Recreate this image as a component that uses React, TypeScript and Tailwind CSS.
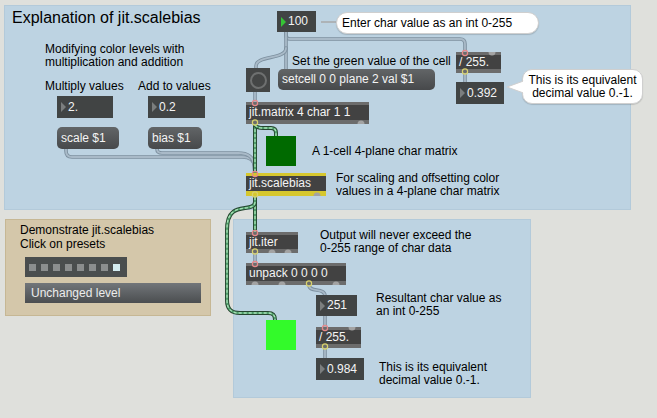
import React from "react";

const Obj = ({ className, label, yellow }: { className: string; label: string; yellow?: boolean }) => {
  const top = yellow ? "h-[3px] bg-[#d6c72e]" : "h-[3px] bg-[#6c6c6c]";
  const bottom = yellow ? "h-[5px] bg-[#d6c72e]" : "h-[4px] bg-[#6c6c6c]";
  return (
    <div className={`absolute flex flex-col bg-[#424242] ${className}`}>
      <div className={top} />
      <div className="flex flex-1 items-center whitespace-nowrap pl-[3px] text-[12px] leading-[13px] text-[#f4f4f4]">
        {label}
      </div>
      <div className={bottom} />
    </div>
  );
};

const Num = ({ className, value, active }: { className: string; value: string; active?: boolean }) => (
  <div className={`absolute flex items-center bg-[#414444] ${className}`}>
    <div
      className={`ml-[4px] h-0 w-0 border-y-[5px] border-l-[5px] border-y-transparent ${
        active ? "border-l-[#35c435]" : "border-l-[#7b7e7e]"
      }`}
    />
    <span className="ml-[2px] text-[12px] leading-[13px] text-[#f4f4f4]">{value}</span>
  </div>
);

const Msg = ({ className, label }: { className: string; label: string }) => (
  <div
    className={`absolute flex items-center whitespace-nowrap rounded-[5px] bg-linear-to-b from-[#626567] to-[#47494b] pl-[4px] text-[12px] leading-[13px] text-[#f4f4f4] ${className}`}
  >
    {label}
  </div>
);

const Note = ({ className, children }: { className: string; children: React.ReactNode }) => (
  <div className={`absolute whitespace-nowrap text-[12px] leading-[13px] text-black ${className}`}>{children}</div>
);

const Gray = ({ d }: { d: string }) => (
  <>
    <path d={d} stroke="#7d909f" strokeWidth={3.6} fill="none" strokeLinecap="round" />
    <path d={d} stroke="#a9bac8" strokeWidth={1.8} fill="none" strokeLinecap="round" />
  </>
);

const Green = ({ d }: { d: string }) => (
  <>
    <path d={d} stroke="#25452f" strokeWidth={4} fill="none" />
    <path d={d} stroke="#4f9d6a" strokeWidth={2.2} fill="none" />
    <path d={d} stroke="#a8e0b6" strokeWidth={1.3} strokeDasharray="3 2" fill="none" />
  </>
);

const inlets: [number, number][] = [
  [255, 102],
  [255, 173],
  [465, 52],
  [255, 232],
  [255, 263],
  [325, 327],
];
const outlets: [number, number][] = [
  [255, 124],
  [255, 196],
  [465, 73],
  [255, 253],
  [309, 285],
  [325, 348],
];
const spareTop: [number, number][] = [
  [492, 52],
  [352, 327],
];
const spareBottom: [number, number][] = [
  [361, 124],
  [317, 196],
  [272, 253],
  [288, 253],
  [255, 285],
  [282, 285],
  [336, 285],
];

export default function App() {
  return (
    <div className="relative h-[418px] w-[657px] overflow-hidden bg-[#dfe0dc] font-['Liberation_Sans',Arial,sans-serif]">
      {/* panels */}
      <div className="absolute left-[4px] top-[5px] h-[205px] w-[627px] border border-[#b3cada] bg-[#bdd3e2]" />
      <div className="absolute left-[233px] top-[219px] h-[179px] w-[298px] border border-[#b3cada] bg-[#bdd3e2]" />

      {/* preset panel */}
      <div className="absolute left-[5px] top-[219px] flex h-[97px] w-[206px] flex-col border border-[#c6b794] bg-[#d4c7aa] pl-[14px] pt-[3px]">
        <div className="text-[12px] leading-[14px] text-black">
          Demonstrate jit.scalebias
          <br />
          Click on presets
        </div>
        <div className="ml-[5px] mt-[6px] flex h-[20px] w-[102px] items-center gap-[5px] bg-[#4a4e4e] pl-[4px]">
          {[0, 1, 2, 3, 4, 5, 6, 7].map((i) => (
            <div key={i} className={`h-[7px] w-[7px] ${i === 7 ? "bg-[#d4ecf0]" : "bg-[#8b8e8e]"}`} />
          ))}
        </div>
        <div className="ml-[5px] mt-[6px] flex h-[20px] w-[176px] items-center bg-linear-to-b from-[#72767a] to-[#4b4e50] pl-[6px] text-[12px] leading-[13px] text-[#ececec]">
          Unchanged level
        </div>
      </div>

      {/* cords */}
      <svg className="pointer-events-none absolute inset-0" width={657} height={418}>
        <line x1={321} y1={22} x2={336} y2={22} stroke="#a9a9a9" strokeWidth={1.5} />
        <Gray d="M286 32 L286 35 Q286 39 290 39 L460 39 Q465 39 465 44 L465 53" />
        <Gray d="M286 32 L286 69" />
        <Gray d="M286 48 C286 60 256 55 256 66 L256 69" />
        <Gray d="M255 92 L255 102" />
        <Gray d="M66 149 L66 151 Q66 157 72 157 L242 157 Q254 157 255 167 L255 174" />
        <Gray d="M157 149 Q157 153 162 153 L238 153 Q253 153 254 165 L255 174" />
        <Gray d="M465 73 L465 82" />
        <Gray d="M255 253 L255 263" />
        <Gray d="M309 285 C309 293 325 287 325 296" />
        <Gray d="M325 316 L325 327" />
        <Gray d="M325 348 L325 358" />
        <Green d="M255 124 L255 173" />
        <Green d="M255 125 Q257 128 263 128 L271 128 Q276 128 276 133 L276 137" />
        <Green d="M255 196 L255 232" />
        <Green d="M255 197 L255 202 C255 210 240 206 233 212 C228 216 227 222 227 230 L227 300 C227 310 232 313 240 313 L268 313 C274 313 275 316 275 320" />
      </svg>

      {/* top panel */}
      <div className="absolute left-[12px] top-[9px] whitespace-nowrap text-[16px] leading-[18px] text-black">
        Explanation of jit.scalebias
      </div>
      <Note className="left-[45px] top-[43px]">
        Modifying color levels with
        <br />
        multiplication and addition
      </Note>
      <Note className="left-[45px] top-[80px]">Multiply values</Note>
      <Note className="left-[138px] top-[80px]">Add to values</Note>
      <Note className="left-[292px] top-[55px]">Set the green value of the cell</Note>
      <Note className="left-[312px] top-[145px]">A 1-cell 4-plane char matrix</Note>
      <Note className="left-[336px] top-[172px]">
        For scaling and offsetting color
        <br />
        values in a 4-plane char matrix
      </Note>

      <Num className="left-[277px] top-[11px] h-[21px] w-[39px]" value="100" active />
      <div className="absolute left-[336px] top-[12px] flex h-[22px] w-[203px] items-center rounded-full border border-[#cfcfcf] bg-white pl-[5px] text-[12px] leading-[13px] text-black shadow-[0_1px_1px_rgba(0,0,0,0.15)]">
        Enter char value as an int 0-255
      </div>

      <div className="absolute left-[246px] top-[68px] flex h-[24px] w-[24px] items-center justify-center bg-[#444646]">
        <div className="h-[17px] w-[17px] rounded-full border-2 border-[#6e7070]" />
      </div>
      <Msg className="left-[278px] top-[69px] h-[21px] w-[157px]" label="setcell 0 0 plane 2 val $1" />

      <Obj className="left-[456px] top-[52px] h-[21px] w-[45px]" label="/ 255." />
      <Num className="left-[456px] top-[82px] h-[22px] w-[48px]" value="0.392" />
      <div className="absolute left-[522px] top-[69px] flex h-[35px] w-[121px] flex-col items-center justify-center rounded-[10px] border border-[#cfcfcf] bg-white text-center text-[12px] leading-[13px] text-black shadow-[0_1px_1px_rgba(0,0,0,0.15)]">
        <span>This is its equivalent</span>
        <span>decimal value 0.-1.</span>
      </div>
      <svg className="pointer-events-none absolute left-[506px] top-[78px]" width={18} height={18}>
        <path d="M17.5 3 L1 9 L17.5 15" fill="white" stroke="#cfcfcf" strokeWidth={1} />
        <rect x={17} y={2.5} width={2} height={13} fill="white" />
      </svg>

      <Num className="left-[57px] top-[96px] h-[22px] w-[56px]" value="2." />
      <Num className="left-[148px] top-[96px] h-[22px] w-[57px]" value="0.2" />
      <Msg className="left-[57px] top-[127px] h-[22px] w-[62px]" label="scale $1" />
      <Msg className="left-[148px] top-[127px] h-[22px] w-[54px]" label="bias $1" />

      <Obj className="left-[246px] top-[102px] h-[22px] w-[123px]" label="jit.matrix 4 char 1 1" />
      <div className="absolute left-[266px] top-[136px] h-[30px] w-[30px] bg-[#006a00]" />
      <Obj className="left-[246px] top-[173px] h-[23px] w-[80px]" label="jit.scalebias" yellow />

      {/* bottom panel */}
      <Obj className="left-[246px] top-[232px] h-[21px] w-[52px]" label="jit.iter" />
      <Note className="left-[320px] top-[229px]">
        Output will never exceed the
        <br />
        0-255 range of char data
      </Note>
      <Obj className="left-[246px] top-[263px] h-[22px] w-[100px]" label="unpack 0 0 0 0" />
      <Num className="left-[316px] top-[295px] h-[21px] w-[41px]" value="251" />
      <Note className="left-[376px] top-[292px]">
        Resultant char value as
        <br />
        an int 0-255
      </Note>
      <Obj className="left-[316px] top-[327px] h-[21px] w-[45px]" label="/ 255." />
      <Num className="left-[316px] top-[358px] h-[22px] w-[48px]" value="0.984" />
      <Note className="left-[379px] top-[361px]">
        This is its equivalent
        <br />
        decimal value 0.-1.
      </Note>
      <div className="absolute left-[266px] top-[320px] h-[30px] w-[30px] bg-[#33fa2a]" />

      {/* inlets / outlets */}
      <svg className="pointer-events-none absolute inset-0" width={657} height={418}>
        {spareTop.map(([x, y]) => (
          <path key={`st${x}${y}`} d={`M${x - 3.5} ${y} A3.5 3.5 0 0 0 ${x + 3.5} ${y} Z`} fill="#a3a3a3" />
        ))}
        {spareBottom.map(([x, y]) => (
          <path key={`sb${x}${y}`} d={`M${x - 3.5} ${y} A3.5 3.5 0 0 1 ${x + 3.5} ${y} Z`} fill="#a3a3a3" />
        ))}
        {inlets.map(([x, y]) => (
          <circle key={`i${x}${y}`} cx={x} cy={y + 1} r={2.6} fill="none" stroke="#e7898a" strokeWidth={1.2} />
        ))}
        {outlets.map(([x, y]) => (
          <circle key={`o${x}${y}`} cx={x} cy={y - 1.5} r={2.6} fill="none" stroke="#d9d26c" strokeWidth={1.2} />
        ))}
      </svg>
    </div>
  );
}
